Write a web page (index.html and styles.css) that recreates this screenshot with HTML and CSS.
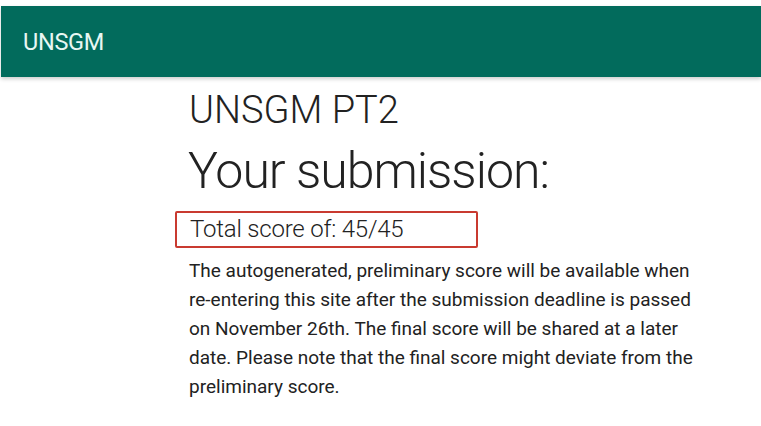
FILE: index.html
```html
<!DOCTYPE html>
<html lang="en">
<head>
  <meta charset="UTF-8" />
  <title>UNSGM PT2</title>
  <link rel="stylesheet" href="styles.css">
</head>
<body>
  <header>
    <span class="brand">UNSGM</span>
  </header>

  <main>
    <h2 class="course">UNSGM PT2</h2>
    <h1 class="title">Your submission:</h1>
    <div class="score">Total score of: 45/45</div>
    <p class="note">The autogenerated, preliminary score will be available when re-entering this site after the submission deadline is passed on November 26th. The final score will be shared at a later date. Please note that the final score might deviate from the preliminary score.</p>
  </main>
</body>
</html>
```

FILE: styles.css
```css
body {
  font-family: Roboto, 'Helvetica Neue', sans-serif;
  background: #fff;
  color: #222;
  margin: 0;
  padding: 6px 0 0 1px;
}
header {
  height: 71px;
  background-color: #026b5c;
  box-shadow: 0 2px 4px rgba(0, 0, 0, 0.2);
  display: flex;
  align-items: center;
  padding-left: 22px;
}
header .brand {
  color: #e8f7f3;
  font-size: 23.5px;
  font-weight: 400;
  letter-spacing: -0.3px;
}
main {
  padding-left: 174px;
}
.course {
  margin: 9px 0 0 14px;
  font-size: 38px;
  font-weight: 300;
  line-height: 48px;
}
.title {
  margin: 6px 0 0 13px;
  font-size: 50px;
  font-weight: 300;
  line-height: 62px;
  letter-spacing: -1px;
}
.score {
  margin-top: 9px;
  width: 286px;
  height: 33px;
  border: 2px solid #c93a30;
  border-radius: 2px;
  font-size: 24px;
  font-weight: 300;
  line-height: 33px;
  letter-spacing: -0.2px;
  padding-left: 13px;
}
.note {
  margin: 8px 0 0 14px;
  width: 510px;
  font-size: 19px;
  line-height: 29px;
}
```
